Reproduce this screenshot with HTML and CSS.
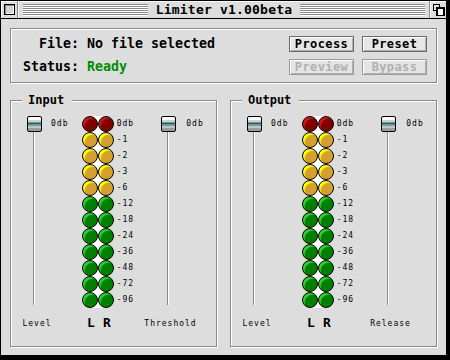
FILE: index.html
```html
<!DOCTYPE html>
<html>
<head>
<meta charset="utf-8">
<link rel="stylesheet" href="styles.css">
</head>
<body>
<div class="window">
  <div class="titlebar">
    <div class="tb-close"><span class="close-box"></span></div>
    <div class="tb-title">
      <span class="stripes"></span>
      <span class="title-text">Limiter v1.00beta</span>
      <span class="stripes"></span>
    </div>
    <div class="tb-collapse">
      <svg width="12" height="12" viewBox="0 0 12 12">
        <rect x="0.5" y="0.5" width="6" height="6" fill="none" stroke="#000" stroke-width="1"/>
        <rect x="4" y="4" width="7" height="8" fill="#fff" stroke="#000" stroke-width="2"/>
      </svg>
    </div>
  </div>
  <div class="content">
    <div class="panel top-panel">
      <div class="info">
        <span class="lbl">File:</span><span class="val">No file selected</span>
        <span class="lbl">Status:</span><span class="val ready">Ready</span>
      </div>
      <div class="buttons">
        <button class="btn">Process</button>
        <button class="btn">Preset</button>
        <button class="btn disabled">Preview</button>
        <button class="btn disabled">Bypass</button>
      </div>
    </div>
    <div class="groups">
      <div class="panel group">
        <span class="legend">Input</span>
        <div class="meter-row">
          <div class="slider"><span class="knob"></span><span class="track"></span></div>
          <div class="slider-val">0db</div>
          <div class="leds">
            <span class="led red"></span><span class="led red"></span>
            <span class="led yel"></span><span class="led yel"></span>
            <span class="led yel"></span><span class="led yel"></span>
            <span class="led yel"></span><span class="led yel"></span>
            <span class="led yel"></span><span class="led yel"></span>
            <span class="led grn"></span><span class="led grn"></span>
            <span class="led grn"></span><span class="led grn"></span>
            <span class="led grn"></span><span class="led grn"></span>
            <span class="led grn"></span><span class="led grn"></span>
            <span class="led grn"></span><span class="led grn"></span>
            <span class="led grn"></span><span class="led grn"></span>
            <span class="led grn"></span><span class="led grn"></span>
          </div>
          <div class="led-labels">
            <span>0db</span><span>-1</span><span>-2</span><span>-3</span><span>-6</span><span>-12</span>
            <span>-18</span><span>-24</span><span>-36</span><span>-48</span><span>-72</span><span>-96</span>
          </div>
          <div class="slider"><span class="knob"></span><span class="track"></span></div>
          <div class="slider-val right">0db</div>
        </div>
        <div class="label-row">
          <span class="cap cap-level">Level</span>
          <span class="cap-gap1"></span>
          <span class="ch">L</span><span class="ch">R</span>
          <span class="cap-gap2"></span>
          <span class="cap cap-right">Threshold</span>
        </div>
      </div>
      <div class="panel group">
        <span class="legend">Output</span>
        <div class="meter-row">
          <div class="slider"><span class="knob"></span><span class="track"></span></div>
          <div class="slider-val">0db</div>
          <div class="leds">
            <span class="led red"></span><span class="led red"></span>
            <span class="led yel"></span><span class="led yel"></span>
            <span class="led yel"></span><span class="led yel"></span>
            <span class="led yel"></span><span class="led yel"></span>
            <span class="led yel"></span><span class="led yel"></span>
            <span class="led grn"></span><span class="led grn"></span>
            <span class="led grn"></span><span class="led grn"></span>
            <span class="led grn"></span><span class="led grn"></span>
            <span class="led grn"></span><span class="led grn"></span>
            <span class="led grn"></span><span class="led grn"></span>
            <span class="led grn"></span><span class="led grn"></span>
            <span class="led grn"></span><span class="led grn"></span>
          </div>
          <div class="led-labels">
            <span>0db</span><span>-1</span><span>-2</span><span>-3</span><span>-6</span><span>-12</span>
            <span>-18</span><span>-24</span><span>-36</span><span>-48</span><span>-72</span><span>-96</span>
          </div>
          <div class="slider"><span class="knob"></span><span class="track"></span></div>
          <div class="slider-val right">0db</div>
        </div>
        <div class="label-row">
          <span class="cap cap-level">Level</span>
          <span class="cap-gap1"></span>
          <span class="ch">L</span><span class="ch">R</span>
          <span class="cap-gap2"></span>
          <span class="cap cap-right">Release</span>
        </div>
      </div>
    </div>
  </div>
</div>
</body>
</html>
```

FILE: styles.css
```css
* { box-sizing: border-box; }

body {
  margin: 0;
  width: 450px;
  height: 360px;
  overflow: hidden;
  background: #000;
  font-family: "DejaVu Sans Mono", "Liberation Mono", monospace;
  color: #000;
}

.window {
  width: 446px;
  height: 355px;
  border-left: 1px solid #000;
  border-top: 1px solid #000;
  background: #dddddd;
  display: flex;
  flex-direction: column;
}

/* Title bar */
.titlebar {
  height: 18px;
  border-bottom: 1px solid #000;
  display: flex;
  background: #dddddd;
}
.tb-close {
  width: 17px;
  border-right: 1px solid #888;
  box-shadow: inset 1px 1px 0 #fff;
  padding: 3px 0 0 3px;
}
.close-box {
  display: block;
  width: 11px;
  height: 11px;
  border: 1px solid #000;
  background: #d4d4d4;
  box-shadow: inset 1px 1px 0 #888, inset -1px -1px 0 #fff;
}
.tb-title {
  flex: 1;
  display: flex;
  align-items: center;
  padding: 0 4px;
  border-left: 1px solid #fff;
  box-shadow: inset 0 1px 0 #fff;
}
.stripes {
  flex: 1;
  height: 12px;
  margin-top: 1px;
  background: repeating-linear-gradient(to bottom, #8a8a8a 0 1px, #ffffff 1px 2px);
}
.title-text {
  margin: 0 8px;
  font-size: 13px;
  font-weight: bold;
  letter-spacing: 0.2px;
  line-height: 17px;
}
.tb-collapse {
  width: 17px;
  border-left: 1px solid #888;
  box-shadow: inset 1px 1px 0 #fff;
  padding: 3px 0 0 3px;
}
.tb-collapse svg { display: block; }

/* Content */
.content {
  flex: 1;
  padding: 9px 9px 0 9px;
}

.panel {
  border: 1px solid #888;
  box-shadow: inset 1px 1px 0 #fff, 1px 1px 0 #fff;
}

.top-panel {
  width: 427px;
  height: 55px;
  display: flex;
  justify-content: space-between;
  padding: 7px 9px 7px 12px;
}

.info {
  display: grid;
  grid-template-columns: 56px auto;
  grid-auto-rows: 16px;
  column-gap: 8px;
  row-gap: 7px;
  align-items: center;
  font-size: 13.3px;
  font-weight: bold;
  line-height: 16px;
}
.lbl { text-align: right; }
.ready { color: #008c00; }

.buttons {
  display: grid;
  grid-template-columns: 65px 65px;
  grid-auto-rows: 16px;
  column-gap: 8px;
  row-gap: 7px;
}
.btn {
  margin: 0;
  padding: 0;
  height: 16px;
  border: 1px solid #6a6a6a;
  background: #e6e6e6;
  box-shadow: inset 1px 1px 0 #fff, inset -1px -1px 0 #b0b0b0;
  font-family: "DejaVu Sans Mono", "Liberation Mono", monospace;
  font-size: 12px;
  font-weight: bold;
  letter-spacing: 0.4px;
  line-height: 14px;
  color: #000;
}
.btn.disabled {
  color: #b0b0b0;
  border-color: #9a9a9a;
  background: #e4e4e4;
}

/* Groups */
.groups {
  display: flex;
  gap: 13px;
  margin-top: 17px;
}
.group {
  position: relative;
  width: 207px;
  height: 247px;
  padding: 15px 0 0 16px;
}
.legend {
  position: absolute;
  top: -8px;
  left: 11px;
  padding: 0 8px 0 6px;
  background: #dddddd;
  font-size: 12px;
  font-weight: bold;
  line-height: 14px;
}

.meter-row {
  display: flex;
  align-items: flex-start;
}
.slider {
  width: 15px;
  display: flex;
  flex-direction: column;
  align-items: center;
}
.knob {
  display: block;
  width: 15px;
  height: 16px;
  border: 1px solid #000;
  border-radius: 2px;
  background: linear-gradient(to bottom,
    #fafafa 0 3px, #d0d0d0 3px 5px, #909090 5px 6px,
    #006c6c 6px 7px, #4aa8a8 7px 8px, #909090 8px 9px,
    #c4c4c4 9px 11px, #9c9c9c 11px);
}
.track {
  display: block;
  width: 1px;
  height: 173px;
  margin-right: 2px;
  background: #8a8a8a;
  box-shadow: 1px 0 0 #fff;
}
.slider-val {
  width: 40px;
  padding-left: 9px;
  font-size: 8px;
  letter-spacing: 1px;
  line-height: 16px;
}
.slider-val.right { padding-left: 10px; }

.leds {
  width: 32px;
  display: grid;
  grid-template-columns: 16px 16px;
  grid-auto-rows: 16px;
  background: linear-gradient(to right, transparent 8px, #fff 8px, #fff 24px, transparent 24px);
}
.led {
  display: block;
  width: 16px;
  height: 16px;
  border: 1px solid #000;
  border-radius: 50%;
}
.led.red { background: radial-gradient(circle at 10px 10px, #800000 0 7.6px, #c81818 9px); }
.led.yel { background: radial-gradient(circle at 10px 10px, #d4a030 0 7.6px, #ffff00 9px); }
.led.grn { background: radial-gradient(circle at 10px 10px, #008000 0 7.6px, #30d030 9px); }

.led-labels {
  width: 48px;
  padding-left: 3px;
  display: flex;
  flex-direction: column;
  font-size: 8px;
  letter-spacing: 1px;
  line-height: 16px;
}

.label-row {
  display: flex;
  align-items: center;
  height: 14px;
  margin-top: 8px;
}
.cap {
  display: flex;
  justify-content: center;
  white-space: nowrap;
  font-size: 8px;
  letter-spacing: 1px;
}
.cap-level { width: 20px; }
.cap-gap1 { width: 36px; }
.ch {
  width: 16px;
  text-align: center;
  font-size: 13px;
  font-weight: bold;
  line-height: 14px;
}
.cap-gap2 { width: 48px; }
.cap-right { width: 15px; }
```
